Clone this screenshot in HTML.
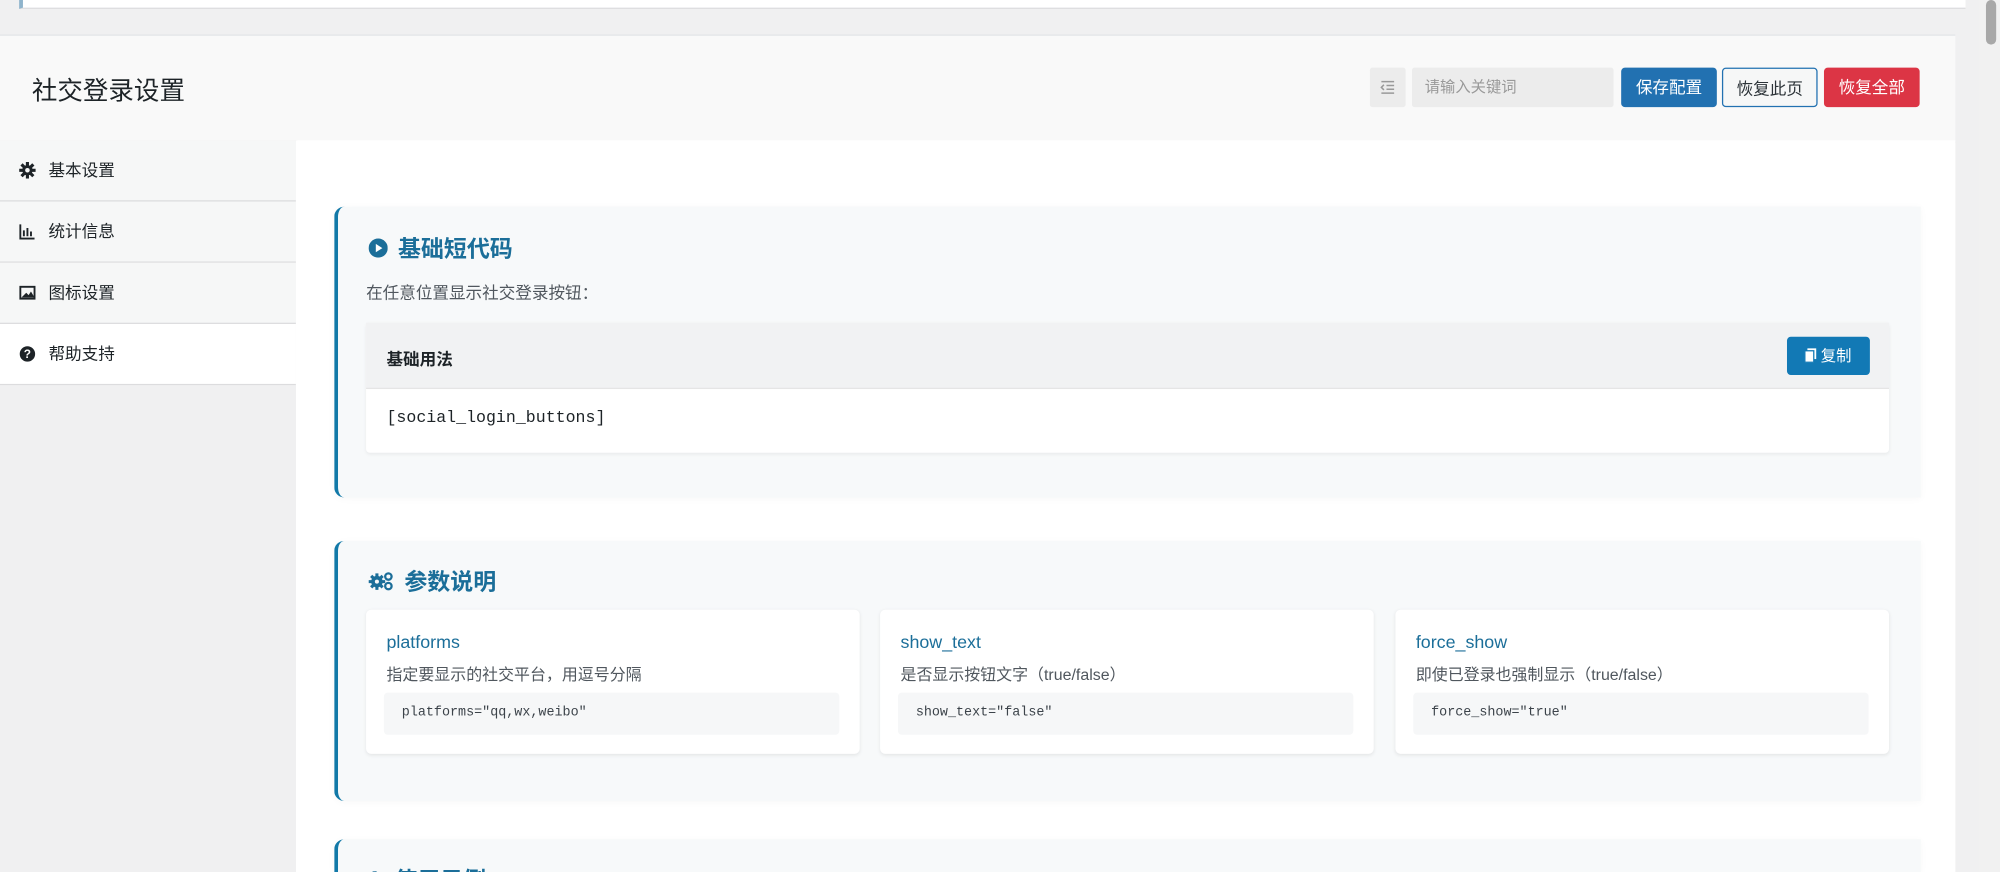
<!DOCTYPE html>
<html><head><meta charset="utf-8"><style>
html,body{margin:0;padding:0;width:2000px;height:872px;overflow:hidden;background:#f0f0f1;}
#w{position:absolute;left:0;top:0;width:1568px;height:684px;overflow:hidden;transform:scale(1.27551);transform-origin:0 0;font-family:"Liberation Sans","Noto Sans CJK SC",sans-serif;color:#1d2327;}
.a{position:absolute;}
.btn{position:absolute;top:53px;height:31px;width:75px;border-radius:3px;font-size:13px;line-height:31px;text-align:center;box-sizing:border-box;}
.nav{position:absolute;left:0;width:232px;height:48px;box-sizing:border-box;border-bottom:1px solid #dcdcde;font-size:13px;line-height:48px;padding-left:38px;background:#f6f7f7;}
.nav svg{position:absolute;left:15px;top:17px;}
.card{position:absolute;left:262px;width:1241px;background:#f7f9fa;border-left:3px solid #1279a8;border-radius:8px 0 0 8px;box-shadow:0 1px 6px rgba(0,0,0,0.03);overflow:hidden;}
.ct{position:absolute;left:24px;font-size:18px;font-weight:bold;color:#1b6e99;}
.pb{position:absolute;top:478px;width:387px;height:113px;background:#fff;border-radius:4px;box-shadow:0 1px 3px rgba(0,0,0,0.08);}
.pn{position:absolute;left:16px;top:17px;font-size:14px;color:#1b6e99;}
.pd{position:absolute;left:16px;top:40px;font-size:12.5px;color:#50575e;}
.pc{position:absolute;left:14px;top:65px;right:16px;height:33px;background:#f6f7f8;border-radius:3px;font-family:"Liberation Mono",monospace;font-size:10.5px;line-height:33px;padding-left:14px;color:#3c434a;}
</style></head><body><div id="w">
<div class="a" style="left:15px;top:0;width:1523px;height:6px;background:#fff;border-bottom:1px solid #dcdcde;border-left:3px solid #8fb4cc;"></div>
<div class="a" style="left:0;top:27px;width:1533px;height:83px;background:#f9f9f9;border-top:1px solid #e2e4e7;border-bottom:1px solid #dcdcde;"></div>
<div class="a" style="left:25px;top:55px;font-size:20px;color:#1d2327;">社交登录设置</div>
<div class="a" style="left:1074px;top:53px;width:28px;height:31px;background:#ececec;border-radius:2px;"><svg width="12" height="12" viewBox="0 0 12 12" style="position:absolute;left:8px;top:10px"><path d="M1 1h10M5 4h6M5 7h6M1 10h10M3 3.5L1 5.5l2 2" stroke="#999" stroke-width="1.2" fill="none"/></svg></div>
<div class="a" style="left:1107px;top:53px;width:158px;height:31px;background:#ececec;border-radius:2px;font-size:12px;line-height:31px;color:#999;padding-left:10px;box-sizing:border-box;">请输入关键词</div>
<div class="btn" style="left:1271px;background:#2271b1;color:#fff;">保存配置</div>
<div class="btn" style="left:1350px;background:#f6f7f7;border:1px solid #2271b1;color:#2c3338;">恢复此页</div>
<div class="btn" style="left:1430px;background:#dc3545;color:#fff;">恢复全部</div>
<div class="a" style="left:0;top:110px;width:232px;height:574px;background:#f0f0f1;border-right:1px solid #e2e4e7;"></div>
<div class="nav" style="top:110px;"><svg width="13" height="13" viewBox="0 0 16 16"><circle cx="8" cy="8" r="5" fill="#1d2327"/><path d="M8 0v16M0 8h16M2.3 2.3l11.4 11.4M13.7 2.3L2.3 13.7" stroke="#1d2327" stroke-width="3"/><circle cx="8" cy="8" r="2.2" fill="#f6f7f7"/></svg>基本设置</div>
<div class="nav" style="top:158px;"><svg width="13" height="13" viewBox="0 0 14 14"><path d="M1 1v12h12" stroke="#1d2327" stroke-width="1.6" fill="none"/><path d="M4 11V6M7 11V4M10 11V7" stroke="#1d2327" stroke-width="1.6"/></svg>统计信息</div>
<div class="nav" style="top:206px;"><svg width="13" height="13" viewBox="0 0 14 14"><rect x="1" y="2" width="12" height="10" fill="none" stroke="#1d2327" stroke-width="1.6"/><path d="M2 11l4-4 2 2 2-3 3 5z" fill="#1d2327"/></svg>图标设置</div>
<div class="nav" style="top:254px;background:#fff;"><svg width="13" height="13" viewBox="0 0 14 14"><circle cx="7" cy="7" r="6.5" fill="#1d2327"/><text x="7" y="10.5" font-size="10" font-weight="bold" fill="#fff" text-anchor="middle" font-family="Liberation Sans">?</text></svg>帮助支持</div>
<div class="a" style="left:232px;top:110px;width:1301px;height:574px;background:#fff;"></div>
<div class="a" style="left:1551px;top:0;width:17px;height:684px;background:#f1f1f1;"></div>
<div class="a" style="left:1557px;top:0;width:8px;height:35px;background:#a8a8a8;border-radius:4px;"></div>

<div class="card" style="top:162px;height:228px;">
 <div class="ct" style="top:19px;"><svg width="15" height="15" viewBox="0 0 16 16" style="vertical-align:-1px;margin-right:8px"><circle cx="8" cy="8" r="8" fill="#1b6e99"/><path d="M6 4.5v7l5.5-3.5z" fill="#fff"/></svg>基础短代码</div>
 <div class="a" style="left:22px;top:57px;font-size:13px;color:#50575e;">在任意位置显示社交登录按钮：</div>
 <div class="a" style="left:22px;top:91px;width:1194px;height:102px;background:#fff;border-radius:3px;box-shadow:0 1px 3px rgba(0,0,0,0.06);">
  <div class="a" style="left:0;top:0;width:1194px;height:51px;background:#f1f2f3;border-bottom:1px solid #e5e5e5;"></div>
  <div class="a" style="left:16px;top:18px;font-size:13px;font-weight:bold;">基础用法</div>
  <div class="a" style="left:1114px;top:11px;width:65px;height:30px;background:#1279b5;border-radius:3px;color:#fff;font-size:12px;line-height:30px;text-align:center;"><svg width="9" height="11" viewBox="0 0 9 11" style="vertical-align:-1px;margin-right:3px"><rect x="2" y="0" width="7" height="8.5" fill="#fff"/><rect x="0" y="2" width="7" height="9" fill="#fff" stroke="#1279b5" stroke-width="1"/></svg>复制</div>
  <div class="a" style="left:16px;top:67px;font-family:'Liberation Mono',monospace;font-size:13px;">[social_login_buttons]</div>
 </div>
</div>

<div class="card" style="top:424px;height:204px;">
 <div class="ct" style="top:18px;"><svg width="20" height="15" viewBox="0 0 20 15" style="vertical-align:-1px;margin-right:8px"><circle cx="6.5" cy="8" r="4.5" fill="#1b6e99"/><path d="M6.5 1.5v13M0 8h13M2 3.5l9 9M11 3.5l-9 9" stroke="#1b6e99" stroke-width="2.4"/><circle cx="6.5" cy="8" r="1.6" fill="#f7f9fa"/><circle cx="15.5" cy="4" r="2.5" fill="none" stroke="#1b6e99" stroke-width="1.8"/><circle cx="15.5" cy="11.5" r="2.5" fill="none" stroke="#1b6e99" stroke-width="1.8"/></svg>参数说明</div>
</div>
<div class="pb" style="left:287px;"><div class="pn">platforms</div><div class="pd">指定要显示的社交平台，用逗号分隔</div><div class="pc">platforms="qq,wx,weibo"</div></div>
<div class="pb" style="left:690px;"><div class="pn">show_text</div><div class="pd">是否显示按钮文字（true/false）</div><div class="pc">show_text="false"</div></div>
<div class="pb" style="left:1094px;"><div class="pn">force_show</div><div class="pd">即使已登录也强制显示（true/false）</div><div class="pc">force_show="true"</div></div>

<div class="card" style="top:658px;height:26px;border-radius:8px 0 0 0;">
 <div class="ct" style="top:18px;">✎ 使用示例</div>
</div>
</div></body></html>
